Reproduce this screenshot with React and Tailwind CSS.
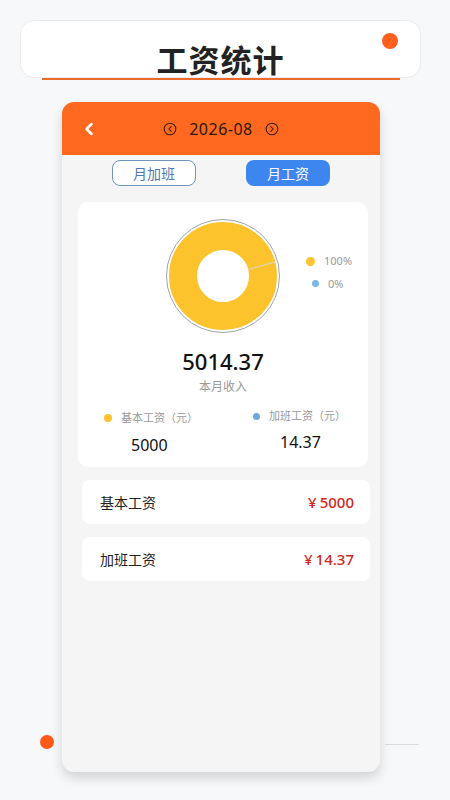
import React from "react";
import { ChevronLeft, CircleChevronLeft, CircleChevronRight } from "lucide-react";

const font = { fontFamily: '"Noto Sans", "Noto Sans CJK SC", sans-serif' };

const Donut = () => (
  <svg width="118" height="118" viewBox="0 0 118 118">
    <circle cx="59" cy="59" r="56.5" fill="white" stroke="#a3a3a3" strokeWidth="1" />
    <circle cx="59" cy="59" r="40" fill="none" stroke="#fcc32c" strokeWidth="28" />
    <line x1="84" y1="52.5" x2="111" y2="45" stroke="#d6d6d6" strokeWidth="1" />
  </svg>
);

const App = () => {
  const rows = [
    { name: "基本工资", amount: "5000" },
    { name: "加班工资", amount: "14.37" },
  ];

  return (
    <div className="relative w-[450px] h-[800px] overflow-hidden bg-[#f6f8fa]" style={font}>
      {/* title card */}
      <div className="relative mt-[20px] ml-[20px] w-[401px] h-[58px] rounded-[14px] bg-white border border-[#ebebeb] flex items-end justify-center">
        <h1 className="text-[31px] leading-none font-bold text-[#222] tracking-[1px] mb-[1px]">工资统计</h1>
        <span className="absolute top-[12px] right-[22px] w-[16px] h-[16px] rounded-full bg-[#ff5f1f]"></span>
      </div>
      <div className="ml-[42px] w-[358px] h-[2px] bg-[#ec6a2c]"></div>

      {/* dot + line at the bottom */}
      <span className="absolute left-[40px] top-[735px] w-[14px] h-[14px] rounded-full bg-[#ff5a17]"></span>
      <div className="absolute left-[385px] top-[744px] w-[34px] h-px bg-[#dcdcdc]"></div>

      {/* phone */}
      <div className="relative mt-[22px] ml-[62px] w-[318px] h-[670px] rounded-[12px] bg-[#f5f5f5] overflow-hidden shadow-[0_6px_12px_rgba(0,0,0,0.15)]">
        <div className="relative h-[53px] bg-[#ff691f] flex items-center justify-center gap-[12px]">
          <ChevronLeft className="absolute left-[17px] top-[17px] text-white" size={20} strokeWidth={3} />
          <CircleChevronLeft size={14} strokeWidth={1.8} className="text-[#3a1c0c]" />
          <span className="text-[16px] text-[#2b1608] tracking-[0.5px]">2026-08</span>
          <CircleChevronRight size={14} strokeWidth={1.8} className="text-[#3a1c0c]" />
        </div>

        <div className="mt-[5px] flex justify-center gap-[50px]">
          <button className="w-[84px] h-[26px] rounded-[8px] border border-[#7094bd] bg-white text-[14px] text-[#4b7ab5]">
            月加班
          </button>
          <button className="w-[84px] h-[26px] rounded-[8px] bg-[#3d86f0] text-[14px] text-white">
            月工资
          </button>
        </div>

        <div className="mt-[16px] ml-[16px] w-[290px] h-[265px] rounded-[10px] bg-white">
          <div className="relative pt-[15px] flex justify-center">
            <Donut />
            <div className="absolute left-[228px] top-[51px] flex flex-col gap-[6px] text-[11px] text-[#999]">
              <div className="flex items-center gap-[9px]">
                <span className="w-[9px] h-[9px] rounded-full bg-[#fcc32c]"></span>
                <span>100%</span>
              </div>
              <div className="flex items-center gap-[9px] pl-[6px]">
                <span className="w-[7px] h-[7px] rounded-full bg-[#7ab6e6]"></span>
                <span>0%</span>
              </div>
            </div>
          </div>
          <div className="mt-[11px] text-center text-[22px] leading-[30px] font-medium text-[#111]">5014.37</div>
          <div className="mt-[2px] text-center text-[12px] text-[#999]">本月收入</div>
          <div className="mt-[14px] flex">
            <div className="w-1/2 pl-[26px]">
              <div className="flex items-center gap-[9px] text-[11px] text-[#999]">
                <span className="w-[8px] h-[8px] rounded-full bg-[#fcc32c]"></span>
                基本工资（元）
              </div>
              <div className="mt-[6px] pl-[27px] text-[16px] text-[#111]">5000</div>
            </div>
            <div className="w-1/2 pl-[30px] -mt-[2px]">
              <div className="flex items-center gap-[9px] text-[11px] text-[#999]">
                <span className="w-[7px] h-[7px] rounded-full bg-[#6fa8d8]"></span>
                加班工资（元）
              </div>
              <div className="mt-[5px] pl-[27px] text-[16px] text-[#111]">14.37</div>
            </div>
          </div>
        </div>

        {rows.map((row) => (
          <div
            key={row.name}
            className="mt-[13px] ml-[20px] w-[288px] h-[44px] rounded-[8px] bg-white flex items-center justify-between pl-[18px] pr-[16px]"
          >
            <span className="text-[14px] text-[#222]">{row.name}</span>
            <span className="text-[15px] font-medium text-[#d0291c]">
              <span className="mr-[3px]">¥</span>
              {row.amount}
            </span>
          </div>
        ))}
      </div>
    </div>
  );
};

export default App;
